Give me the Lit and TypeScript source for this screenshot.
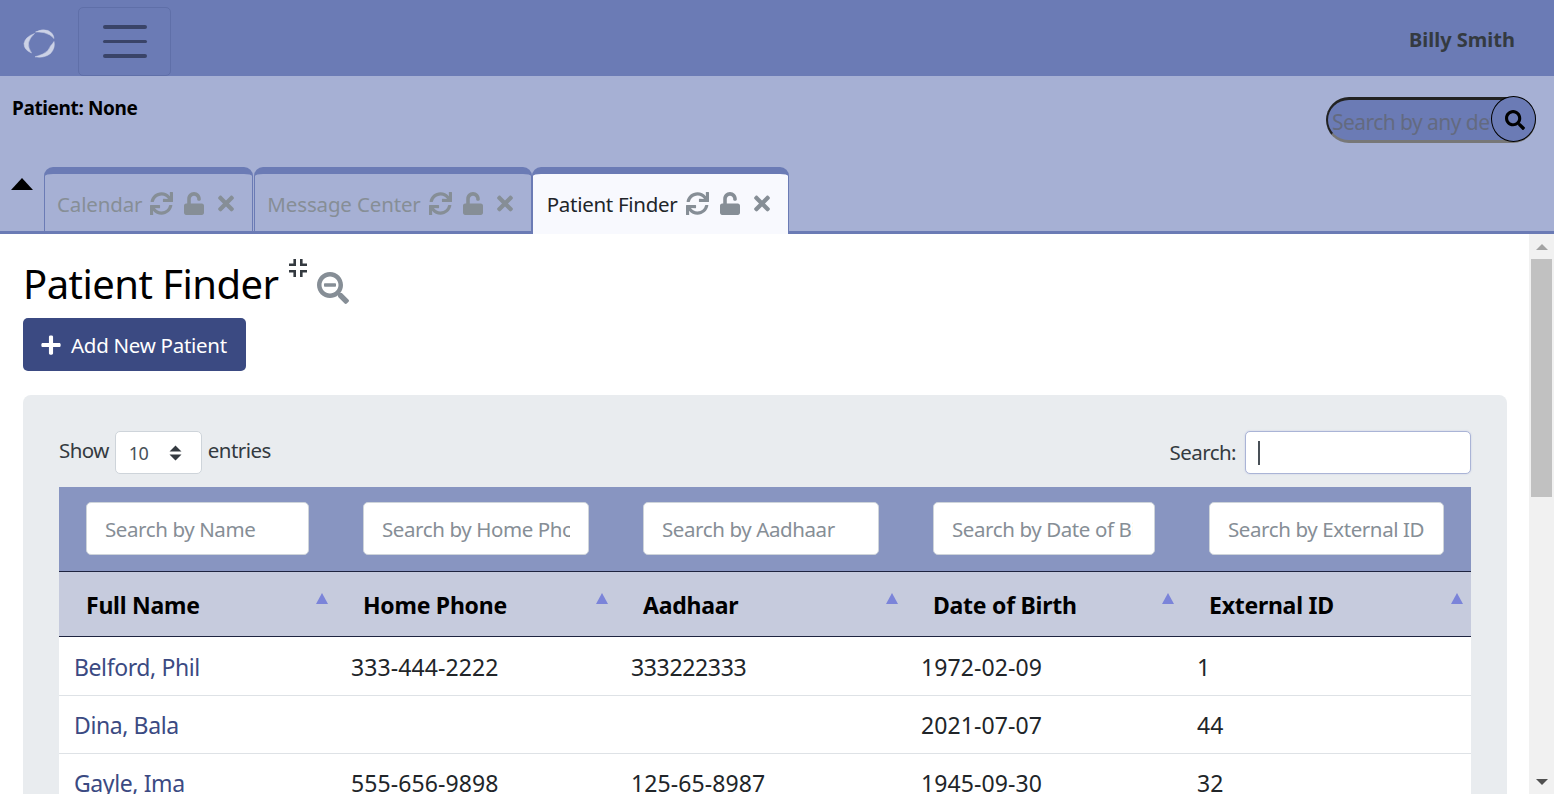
import { css, html, LitElement, svg } from "lit";
import { customElement } from "lit/decorators.js";

const ICONS = {
	sync: { w: 512, d: "M440.65 12.57l4 82.77A247.16 247.16 0 0 0 255.83 8C134.73 8 33.91 94.92 12.29 209.82A12 12 0 0 0 24.09 224h49.05a12 12 0 0 0 11.67-9.26 175.91 175.91 0 0 1 317-56.94l-101.46-4.86a12 12 0 0 0-12.57 12v47.41a12 12 0 0 0 12 12H500a12 12 0 0 0 12-12V12a12 12 0 0 0-12-12h-47.37a12 12 0 0 0-11.98 12.57zM255.83 432a175.61 175.61 0 0 1-146-77.8l101.8 4.87a12 12 0 0 0 12.57-12v-47.4a12 12 0 0 0-12-12H12a12 12 0 0 0-12 12V500a12 12 0 0 0 12 12h47.35a12 12 0 0 0 12-12.6l-4.15-82.57A247.17 247.17 0 0 0 255.83 504c121.11 0 221.93-86.92 243.55-201.82a12 12 0 0 0-11.8-14.18h-49.05a12 12 0 0 0-11.67 9.26A175.86 175.86 0 0 1 255.83 432z" },
	unlock: { w: 448, d: "M400 256H152V152.9c0-39.6 31.7-72.5 71.3-72.9 40-.4 72.7 32.1 72.7 72v16c0 13.3 10.7 24 24 24h32c13.3 0 24-10.7 24-24v-16C376 68 307.5-.3 223.5 0 139.5.3 72 69.5 72 153.5V256H48c-26.5 0-48 21.5-48 48v160c0 26.5 21.5 48 48 48h352c26.5 0 48-21.5 48-48V304c0-26.5-21.5-48-48-48z" },
	times: { w: 352, d: "M242.72 256l100.07-100.07c12.28-12.28 12.28-32.19 0-44.48l-22.24-22.24c-12.28-12.28-32.19-12.28-44.48 0L176 189.28 75.93 89.21c-12.28-12.28-32.19-12.28-44.48 0L9.21 111.45c-12.28 12.28-12.28 32.19 0 44.48L109.28 256 9.21 356.07c-12.28 12.28-12.28 32.19 0 44.48l22.24 22.24c12.28 12.28 32.2 12.28 44.48 0L176 322.72l100.07 100.07c12.28 12.28 32.2 12.28 44.48 0l22.24-22.24c12.28-12.28 12.28-32.19 0-44.48L242.72 256z" },
	search: { w: 512, d: "M505 442.7L405.3 343c-4.5-4.5-10.6-7-17-7H372c27.6-35.3 44-79.7 44-128C416 93.1 322.9 0 208 0S0 93.1 0 208s93.1 208 208 208c48.3 0 92.7-16.4 128-44v16.3c0 6.4 2.5 12.5 7 17l99.7 99.7c9.4 9.4 24.6 9.4 33.9 0l28.3-28.3c9.4-9.4 9.4-24.6.1-34zM208 336c-70.7 0-128-57.2-128-128 0-70.7 57.2-128 128-128 70.7 0 128 57.2 128 128 0 70.7-57.2 128-128 128z" },
	searchMinus: { w: 512, d: "M304 192v32c0 6.6-5.4 12-12 12H124c-6.6 0-12-5.4-12-12v-32c0-6.6 5.4-12 12-12h168c6.6 0 12 5.4 12 12zm201 284.7L476.7 505c-9.4 9.4-24.6 9.4-33.9 0L343 405.3c-4.5-4.5-7-10.6-7-17V372c-35.3 27.6-79.7 44-128 44C93.1 416 0 322.9 0 208S93.1 0 208 0s208 93.1 208 208c0 48.3-16.4 92.7-44 128h16.3c6.4 0 12.5 2.5 17 7l99.7 99.7c9.3 9.4 9.3 24.6 0 34zM344 208c0-75.2-60.8-136-136-136S72 132.8 72 208s60.8 136 136 136 136-60.8 136-136z" },
	plus: { w: 448, d: "M416 208H272V64c0-17.67-14.33-32-32-32h-32c-17.67 0-32 14.33-32 32v144H32c-17.67 0-32 14.33-32 32v32c0 17.67 14.33 32 32 32h144v144c0 17.67 14.33 32 32 32h32c17.67 0 32-14.33 32-32V304h144c17.67 0 32-14.33 32-32v-32c0-17.67-14.33-32-32-32z" },
};

function icon(name: keyof typeof ICONS, cls: string) {
	const i = ICONS[name];
	return html`<svg class=${cls} viewBox="0 0 ${i.w} 512">${svg`<path fill="currentColor" d=${i.d}></path>`}</svg>`;
}

const TABS = [
	{ label: "Calendar", active: false },
	{ label: "Message Center", active: false },
	{ label: "Patient Finder", active: true },
];

const FILTERS = ["Search by Name", "Search by Home Phone", "Search by Aadhaar", "Search by Date of Birth", "Search by External ID"];
const HEADS = ["Full Name", "Home Phone", "Aadhaar", "Date of Birth", "External ID"];
const COLS = [277, 280, 290, 276, 289];
const ROWS = [
	["Belford, Phil", "333-444-2222", "333222333", "1972-02-09", "1"],
	["Dina, Bala", "", "", "2021-07-07", "44"],
	["Gayle, Ima", "555-656-9898", "125-65-8987", "1945-09-30", "32"],
];

@customElement("app-root")
export class AppRoot extends LitElement {
	static override styles = css`
		:host {
			display: flex;
			flex-direction: column;
			height: 100vh;
			overflow: hidden;
			font-family: "Noto Sans", sans-serif;
			color: #212529;
			background: #fff;
		}

		.topbar {
			flex: none;
			height: 76px;
			display: flex;
			align-items: flex-end;
			background: #6b7bb5;
		}
		.logo {
			width: 32px;
			height: 32px;
			margin: 0 23px 17px 23px;
		}
		.burger {
			width: 93px;
			height: 69px;
			box-sizing: border-box;
			border: 1px solid #5f6fa8;
			border-radius: 5px;
			display: flex;
			flex-direction: column;
			justify-content: center;
			align-items: center;
			gap: 11px;
		}
		.burger span {
			display: block;
			width: 44px;
			height: 3.5px;
			border-radius: 2px;
			background: #3a4468;
		}
		.user {
			margin: 0 39px 21px auto;
			font-size: 20px;
			line-height: 30px;
			font-weight: 700;
			color: #343a40;
		}

		.subbar {
			flex: none;
			height: 158px;
			box-sizing: border-box;
			background: #a6b0d4;
			border-bottom: 3px solid #6b7bb5;
			display: flex;
			flex-direction: column;
		}
		.subtop {
			height: 91px;
			flex: none;
			display: flex;
			justify-content: space-between;
			align-items: flex-start;
		}
		.patient {
			margin: 19px 0 0 12px;
			font-size: 19px;
			line-height: 26px;
			font-weight: 700;
			letter-spacing: -0.38px;
			color: #000;
		}
		.omni {
			position: relative;
			margin: 21px 18px 0 0;
			width: 210px;
			height: 46px;
		}
		.omni input {
			width: 100%;
			height: 100%;
			box-sizing: border-box;
			border-style: solid;
			border-width: 3px 2px;
			border-color: #222 #777 #777 #222;
			border-radius: 23px;
			background: #6b7bb5;
			padding: 4px 44px 0 4px;
			font: 21px "Noto Sans", sans-serif;
			letter-spacing: -0.55px;
			outline: none;
		}
		.omni input::placeholder {
			color: #636a80;
			opacity: 1;
		}
		.omni button {
			position: absolute;
			right: 0;
			top: -1px;
			width: 45px;
			height: 46px;
			padding: 1px 0 0 2px;
			border: 1px solid #000;
			border-radius: 50%;
			background: #6b7bb5;
			color: #000;
			display: flex;
			align-items: center;
			justify-content: center;
		}
		.omni svg {
			width: 20px;
			height: 20px;
		}
		.tabrow {
			flex: 1;
			display: flex;
			align-items: stretch;
		}
		.caret {
			width: 44px;
			flex: none;
			display: flex;
			justify-content: center;
			padding-top: 11px;
			box-sizing: border-box;
		}
		.caret i {
			width: 0;
			height: 0;
			border-left: 11px solid transparent;
			border-right: 11px solid transparent;
			border-bottom: 12px solid #000;
		}
		.tabs {
			display: flex;
			gap: 1px;
		}
		.tab {
			box-sizing: border-box;
			height: 64px;
			display: flex;
			align-items: center;
			border-top: 7px solid #6b7bb5;
			border-left: 1px solid #6b7bb5;
			border-right: 1px solid #6b7bb5;
			border-radius: 9px 9px 0 0;
			padding: 2px 18px 0 12px;
			font-size: 20.5px;
			letter-spacing: -0.15px;
			color: #868e96;
		}
		.tab.active {
			background: #f8f9fe;
			color: #212529;
			letter-spacing: -0.28px;
			padding: 0 18px 1px 14px;
			margin: 0 0 -3px -1px;
			height: 67px;
		}
		.tab svg {
			color: #868e96;
			flex: none;
		}
		.ic-sync {
			width: 23px;
			height: 23px;
			margin-left: 8px;
		}
		.ic-unlock {
			width: 20px;
			height: 23px;
			margin-left: 11px;
		}
		.ic-times {
			width: 16px;
			height: 23px;
			margin-left: 14px;
		}

		.body {
			flex: 1;
			min-height: 0;
			display: flex;
		}
		.main {
			flex: 1;
			min-width: 0;
			overflow: hidden;
			padding: 0 22px 0 23px;
		}
		.scrollbar {
			flex: none;
			width: 25px;
			background: #f1f1f1;
			display: flex;
			flex-direction: column;
			align-items: center;
		}
		.scrollbar .up,
		.scrollbar .down {
			flex: none;
			width: 0;
			height: 0;
			border-left: 6px solid transparent;
			border-right: 6px solid transparent;
		}
		.scrollbar .up {
			margin-top: 10px;
			border-bottom: 6px solid #a3a3a3;
		}
		.scrollbar .down {
			margin-top: auto;
			margin-bottom: 9px;
			border-top: 6px solid #505050;
		}
		.thumb {
			width: 21px;
			height: 238px;
			margin-top: 9px;
			background: #c1c1c1;
		}

		.title {
			display: flex;
			align-items: flex-start;
			height: 84px;
		}
		h1 {
			margin: 21px 0 0 0;
			font-size: 40px;
			line-height: 58px;
			font-weight: 400;
			letter-spacing: -0.54px;
			color: #000;
		}
		.compress {
			width: 18px;
			height: 18px;
			margin: 25px 0 0 11px;
			color: #343a40;
		}
		.zoom-out {
			width: 32px;
			height: 32px;
			margin: 38px 0 0 10px;
			color: #868e96;
		}
		.add {
			display: inline-flex;
			align-items: center;
			gap: 10px;
			height: 53px;
			width: 223px;
			box-sizing: border-box;
			padding: 0 0 0 18px;
			border: none;
			border-radius: 5px;
			background: #3b4a82;
			color: #fff;
			font: 20.5px "Noto Sans", sans-serif;
			letter-spacing: -0.28px;
			vertical-align: top;
		}
		.add svg {
			width: 20px;
			height: 22px;
		}

		.well {
			margin-top: 24px;
			background: #e9ecef;
			border-radius: 8px;
			padding: 36px 36px 40px;
		}
		.controls {
			display: flex;
			justify-content: space-between;
			height: 56px;
			font-size: 20.5px;
			letter-spacing: -0.55px;
			color: #343a40;
		}
		.len {
			display: flex;
			align-items: flex-start;
			gap: 6px;
			line-height: 38px;
		}
		.select {
			box-sizing: border-box;
			width: 87px;
			height: 43px;
			padding: 0 19px 0 13px;
			background: #fff;
			border: 1px solid #ced4da;
			border-radius: 5px;
			display: flex;
			align-items: center;
			justify-content: space-between;
			font-size: 18px;
			color: #495057;
		}
		.select svg {
			width: 13px;
			height: 16px;
			color: #343a40;
		}
		.find {
			display: flex;
			align-items: flex-start;
			gap: 9px;
			line-height: 43px;
		}
		.find div {
			box-sizing: border-box;
			width: 226px;
			height: 43px;
			background: #fff;
			border: 1px solid #aab4d6;
			border-radius: 5px;
			box-shadow: 0 0 2px #c4cbe2;
			padding: 9px 0 0 12px;
		}
		.find i {
			display: block;
			width: 2px;
			height: 24px;
			background: #495057;
		}

		table {
			table-layout: fixed;
			width: 1412px;
			border-collapse: collapse;
		}
		.filters th {
			background: #8895c1;
			padding: 15px 27px 16px;
			border-bottom: 1px solid #1e2440;
			height: 53px;
			box-sizing: content-box;
		}
		.filters input {
			display: block;
			width: 100%;
			height: 53px;
			box-sizing: border-box;
			border: 1px solid #ced4da;
			border-radius: 5px;
			padding: 0 21px 0 18px;
			background: #fff;
			font: 20.5px "Noto Sans", sans-serif;
			letter-spacing: -0.4px;
		}
		.filters th:nth-child(2) input,
		.filters th:last-child input {
			padding-right: 18px;
		}
		.filters input::placeholder {
			color: #868e96;
			opacity: 1;
		}
		.heads th {
			position: relative;
			height: 65px;
			box-sizing: border-box;
			padding: 1px 0 0 27px;
			background: #c6cbdd;
			border-bottom: 1px solid #1e2440;
			text-align: left;
			font-size: 23px;
			font-weight: 700;
			letter-spacing: -0.25px;
			color: #000;
		}
		.heads th i {
			position: absolute;
			right: 8px;
			top: 21px;
			width: 0;
			height: 0;
			border-left: 6px solid transparent;
			border-right: 6px solid transparent;
			border-bottom: 11px solid #7b84d9;
		}
		td {
			height: 58px;
			box-sizing: border-box;
			padding: 1px 0 0 15px;
			background: #fff;
			border-bottom: 1px solid #dee2e6;
			font-size: 23px;
			letter-spacing: 0.1px;
			color: #212529;
		}
		tbody tr:first-child td {
			height: 59px;
		}
		td.digits {
			letter-spacing: -0.35px;
		}
		td a {
			color: #3b4a82;
			text-decoration: none;
			letter-spacing: -0.4px;
		}
	`;

	private renderTab(tab: { label: string; active: boolean }) {
		return html`
			<div class="tab ${tab.active ? "active" : ""}">
				<span>${tab.label}</span>
				${icon("sync", "ic-sync")} ${icon("unlock", "ic-unlock")} ${icon("times", "ic-times")}
			</div>
		`;
	}

	override render() {
		return html`
			<div class="topbar">
				<svg class="logo" viewBox="0 0 32 32" fill="#ccd2e6" stroke="#ccd2e6" stroke-width="0.5" stroke-linejoin="round">
					<path d="M11.5 6.5Q2 10 1 16.5Q1 23 8.5 26Q5 21 5.5 16Q6.5 11 11.5 6.5Z"></path>
					<path d="M12.5 5Q19 1.5 25 3.5Q30.5 6 31 11.5Q27 7 21 5.6Q16 4.6 12.5 5Z"></path>
					<path d="M31 14.5Q32.5 21 27.5 26.5Q21 31.5 12 29.8Q15 29 20 27Q26 24 27.5 19Q29.5 17 31 14.5Z"></path>
				</svg>
				<div class="burger"><span></span><span></span><span></span></div>
				<div class="user">Billy Smith</div>
			</div>
			<div class="subbar">
				<div class="subtop">
					<div class="patient">Patient: None</div>
					<div class="omni">
						<input placeholder="Search by any detail" />
						<button>${icon("search", "")}</button>
					</div>
				</div>
				<div class="tabrow">
					<div class="caret"><i></i></div>
					<div class="tabs">${TABS.map((t) => this.renderTab(t))}</div>
				</div>
			</div>
			<div class="body">
				<div class="main">
					<div class="title">
						<h1>Patient Finder</h1>
						<svg class="compress" viewBox="0 0 18 18" fill="none" stroke="currentColor" stroke-width="2.6">
							<path d="M5.7 0V5.7H0M12.3 0V5.7H18M5.7 18V12.3H0M12.3 18V12.3H18"></path>
						</svg>
						${icon("searchMinus", "zoom-out")}
					</div>
					<button class="add">${icon("plus", "")}<span>Add New Patient</span></button>
					<div class="well">
						<div class="controls">
							<div class="len">
								<span>Show</span>
								<div class="select">
									<span>10</span>
									<svg viewBox="0 0 13 16"><path fill="currentColor" d="M6.5 0.5 12.5 6.5H0.5ZM0.5 9.5H12.5L6.5 15.5Z"></path></svg>
								</div>
								<span>entries</span>
							</div>
							<div class="find">
								<span>Search:</span>
								<div><i></i></div>
							</div>
						</div>
						<table>
							<colgroup>${COLS.map((w) => html`<col style="width:${w}px" />`)}</colgroup>
							<thead>
								<tr class="filters">
									${FILTERS.map((f) => html`<th><input placeholder=${f} /></th>`)}
								</tr>
								<tr class="heads">
									${HEADS.map((h) => html`<th>${h}<i></i></th>`)}
								</tr>
							</thead>
							<tbody>
								${ROWS.map(
									(r) => html`<tr>
										<td><a href="#">${r[0]}</a></td>
										${r.slice(1).map((v) => html`<td class=${/^\d{5,}$/.test(v) ? "digits" : ""}>${v}</td>`)}
									</tr>`,
								)}
							</tbody>
						</table>
					</div>
				</div>
				<div class="scrollbar">
					<i class="up"></i>
					<div class="thumb"></div>
					<i class="down"></i>
				</div>
			</div>
		`;
	}
}
